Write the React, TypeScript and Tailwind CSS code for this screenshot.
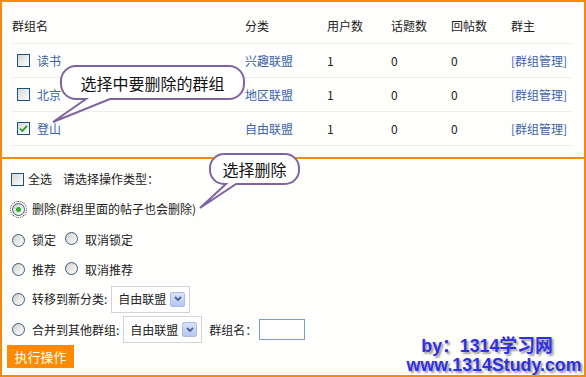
import React from 'react';

const font = { fontFamily: '"Noto Sans CJK SC", "Liberation Sans", sans-serif' };

type Group = { name: string; category: string; users: number; topics: number; replies: number; checked?: boolean };

const groups: Group[] = [
  { name: '读书', category: '兴趣联盟', users: 1, topics: 0, replies: 0 },
  { name: '北京', category: '地区联盟', users: 1, topics: 0, replies: 0 },
  { name: '登山', category: '自由联盟', users: 1, topics: 0, replies: 0, checked: true },
];

function CheckBox({ checked = false }: { checked?: boolean }) {
  return (
    <span className="relative inline-block h-[13px] w-[13px] shrink-0 border border-[#1c5180] bg-linear-to-br from-[#d6d6d6] to-white">
      {checked && (
        <svg viewBox="0 0 11 11" className="absolute inset-0 h-[11px] w-[11px]">
          <path d="M2 5.5 L4.3 8 L9 2.8" fill="none" stroke="#21a121" strokeWidth="1.8" />
        </svg>
      )}
    </span>
  );
}

function Radio({ checked = false }: { checked?: boolean }) {
  return (
    <span
      className={`relative inline-flex h-[13px] w-[13px] shrink-0 items-center justify-center rounded-full border border-[#3d5a78] bg-linear-to-br from-[#d0d0d0] to-white ${
        checked ? 'outline-1 outline-offset-1 outline-dotted outline-[#333]' : ''
      }`}
    >
      {checked && <span className="h-[5px] w-[5px] rounded-full bg-[#2fae2f]" />}
    </span>
  );
}

function Select({ value }: { value: string }) {
  return (
    <span className="inline-flex h-[27px] w-[79px] shrink-0 items-center justify-between border border-[#d4d4d4] bg-white pl-[6px] pr-[4px]">
      <span className="text-[12px] text-[#222]">{value}</span>
      <span className="flex h-[15px] w-[15px] items-center justify-center rounded-[2px] border border-[#a9bce6] bg-linear-to-b from-[#d9e3fb] to-[#b5c8f2]">
        <svg viewBox="0 0 8 6" className="h-[6px] w-[8px]">
          <path d="M1 1 L4 4 L7 1" fill="none" stroke="#4d6185" strokeWidth="1.8" />
        </svg>
      </span>
    </span>
  );
}

export default function App() {
  return (
    <div
      className="relative h-[377px] w-[586px] overflow-hidden border-2 border-[#f78a0c] bg-[#fefefc] text-[12px] text-[#222]"
      style={font}
    >
      {/* 群组列表 */}
      <div className="h-[155px] pl-[10px] pt-[6px]">
        <div className="w-[560px]">
          <div className="flex h-[36px] items-center border-b border-[#eeeeee] text-[#222]">
            <span className="w-[233px]">群组名</span>
            <span className="w-[82px]">分类</span>
            <span className="w-[64px]">用户数</span>
            <span className="w-[60px]">话题数</span>
            <span className="w-[60px]">回帖数</span>
            <span>群主</span>
          </div>
          {groups.map((g) => (
            <div key={g.name} className="flex h-[34px] items-center border-b border-[#eeeeee]">
              <span className="flex w-[233px] items-center gap-[7px] pl-[5px]">
                <CheckBox checked={g.checked} />
                <span className="text-[#3a63a8]">{g.name}</span>
              </span>
              <span className="w-[82px] text-[#3a63a8]">{g.category}</span>
              <span className="w-[64px]">{g.users}</span>
              <span className="w-[60px]">{g.topics}</span>
              <span className="w-[60px]">{g.replies}</span>
              <span className="text-[#3a63a8]">[群组管理]</span>
            </div>
          ))}
        </div>
      </div>

      {/* 操作区 */}
      <div className="border-t-2 border-[#f78a0c] pt-[6px]">
        <div className="flex h-[28px] items-center pl-[9px]">
          <CheckBox />
          <span className="ml-[4px]">全选</span>
          <span className="ml-[11px]">请选择操作类型：</span>
        </div>
        <div className="flex h-[32px] items-center gap-[7px] pl-[10px]">
          <Radio checked />
          <span>删除(群组里面的帖子也会删除)</span>
        </div>
        <div className="flex h-[30px] items-center pl-[10px]">
          <Radio />
          <span className="ml-[7px]">锁定</span>
          <span className="ml-[9px]">
            <Radio />
          </span>
          <span className="ml-[7px]">取消锁定</span>
        </div>
        <div className="flex h-[29px] items-center pl-[10px]">
          <Radio />
          <span className="ml-[7px]">推荐</span>
          <span className="ml-[9px]">
            <Radio />
          </span>
          <span className="ml-[7px]">取消推荐</span>
        </div>
        <div className="flex h-[30px] items-center pl-[10px]">
          <Radio />
          <span className="ml-[7px] mr-[4px]">转移到新分类:</span>
          <Select value="自由联盟" />
        </div>
        <div className="flex h-[31px] items-center pl-[10px]">
          <Radio />
          <span className="ml-[7px] mr-[4px]">合并到其他群组:</span>
          <Select value="自由联盟" />
          <span className="ml-[7px]">群组名：</span>
          <span className="ml-[2px] h-[21px] w-[46px] border border-[#7a9cc6] bg-white" />
        </div>
        <div className="pl-[5px]">
          <button className="h-[23px] w-[67px] bg-[#ff8a00] text-[13px] text-white">执行操作</button>
        </div>
      </div>

      {/* 提示气泡 */}
      <svg className="pointer-events-none absolute left-[-2px] top-[-2px]" width="586" height="377">
        <path
          d="M76 66 H229 A15 15 0 0 1 244 81 V84 A15 15 0 0 1 229 99 H110 L53 122 L86 99 H76 A15 15 0 0 1 61 84 V81 A15 15 0 0 1 76 66 Z"
          fill="#ffffff"
          stroke="#8064a2"
          strokeWidth="2"
        />
        <path
          d="M224 154 H285 A14 14 0 0 1 299 168 V170 A14 14 0 0 1 285 184 H236 L200 208 L226 184 H224 A14 14 0 0 1 210 170 V168 A14 14 0 0 1 224 154 Z"
          fill="#ffffff"
          stroke="#8064a2"
          strokeWidth="2"
        />
      </svg>
      <div className="absolute left-[59px] top-[64px] flex h-[33px] w-[183px] items-center justify-center text-[16px] text-[#111]">
        选择中要删除的群组
      </div>
      <div className="absolute left-[208px] top-[152px] flex h-[30px] w-[89px] items-center justify-center text-[16px] text-[#111]">
        选择删除
      </div>

      {/* 水印 */}
      <div
        className="absolute left-[401px] top-[335px] w-[182px] text-center text-[17.8px] font-bold leading-[19px] text-[#2f2fe6] [text-shadow:2px_2px_2px_#9a9a9a]"
        style={{ fontFamily: '"Liberation Sans", "Noto Sans CJK SC", sans-serif' }}
      >
        <div className="pr-[14px]">by：1314学习网</div>
        <div>www.1314Study.com</div>
      </div>
    </div>
  );
}
